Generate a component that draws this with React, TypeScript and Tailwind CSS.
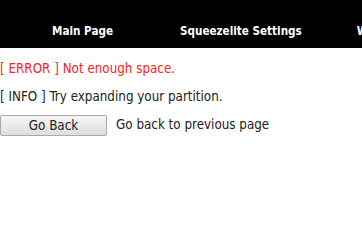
export default function App() {
  return (
    <div className="w-[362px] h-[245px] overflow-hidden bg-white font-['DejaVu_Sans_Condensed','DejaVu_Sans',sans-serif] text-[13.3px] text-[#222]">
      <nav className="h-[48px] bg-black flex items-end pb-[8px] whitespace-nowrap font-bold text-[11.6px] text-white">
        <span className="ml-[52px]">Main Page</span>
        <span className="ml-[67px]">Squeezelite Settings</span>
        <span className="ml-[55px]">Wifi</span>
      </nav>
      <div className="pt-[11px]">
        <p className="text-[#f22]">[ ERROR ] Not enough space.</p>
        <p className="mt-[8px]">
          <span className="text-[#1a1a6a]">[ </span>INFO<span className="text-[#1a1a6a]"> ]</span> Try expanding your partition.
        </p>
        <div className="mt-[8px] flex items-center gap-[9px]">
          <button className="w-[107px] h-[21px] border border-[#a9a9a9] rounded-[2px] bg-gradient-to-b from-[#f6f6f6] to-[#dedede] text-[#222]">
            Go Back
          </button>
          <span>Go back to previous page</span>
        </div>
      </div>
    </div>
  );
}
